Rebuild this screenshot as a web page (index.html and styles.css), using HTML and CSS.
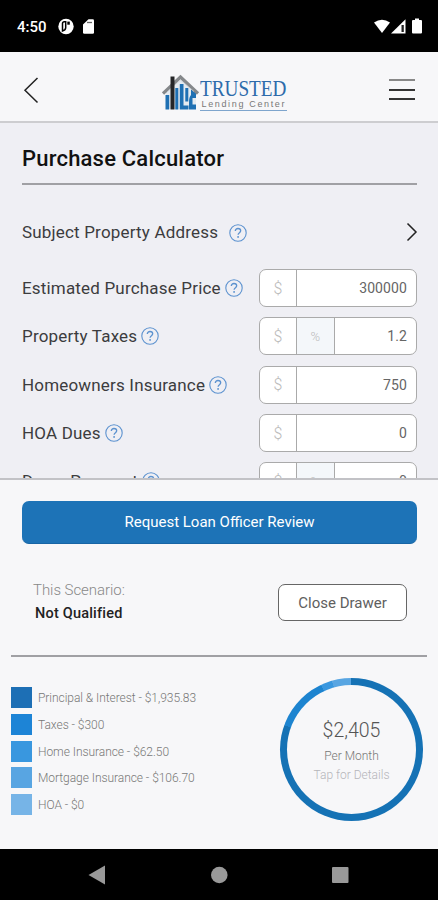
FILE: index.html
```html
<!DOCTYPE html>
<html lang="en">
<head>
<meta charset="utf-8">
<title>Purchase Calculator</title>
<link rel="stylesheet" href="styles.css">
</head>
<body>
<svg class="defs" aria-hidden="true">
  <symbol id="help" viewBox="0 0 18 18">
    <circle cx="9" cy="9" r="8.2" fill="none" stroke="#5c92cf" stroke-width="1.1"/>
    <path d="M6.300 7.1C6.300 5.4 7.4 4.500 9 4.500s2.700.9 2.700 2.300c0 1.8-2.500 1.900-2.600 4" fill="none" stroke="#5c92cf" stroke-width="1.3"/>
    <circle cx="9.1" cy="12.9" r=".95" fill="#5c92cf"/>
  </symbol>
</svg>
<div class="phone">
  <div class="status">
    <span class="clock">4:50</span>
    <svg class="status-left" width="40" height="18" viewBox="0 0 40 18">
      <circle cx="8" cy="8.500" r="7.700" fill="#fff"/>
      <path d="M4.500 13V5.500Q4.500 3.800 6.200 3.800H7.700V9.800Q7.700 12.200 4.500 13Z" fill="#fff" stroke="#000" stroke-width="1.500"/>
      <path d="M9.300 3.600h2.500v3.100H9.300z" fill="#000"/>
      <path d="M30.500 1.300h4.200q1.300 0 1.300 1.300v11.900q0 1.300-1.300 1.300H26.300q-1.300 0-1.300-1.300V6.500z" fill="#fff"/>
      <path d="M29 4.500h5" stroke="#666" stroke-width="1.300"/>
    </svg>
    <svg class="status-right" width="50" height="18" viewBox="0 0 50 18">
      <path d="M0 4.600Q8 -1.200 16 4.600L8 15z" fill="#fff"/>
      <path d="M17 15.500 31.500 1.300V15.500z" fill="#fff"/>
      <path d="M27.500 7h2.300v7h-2.300z" fill="#222"/>
      <path d="M39 2h2V.6h4V2h2q1 0 1 1v11.500q0 1-1 1h-8q-1 0-1-1V3q0-1 1-1z" fill="#fff"/>
    </svg>
  </div>

  <header class="header">
    <svg class="back" width="16" height="28" viewBox="0 0 16 28"><path d="M14.500 2 2 14.300 14.500 26.500" fill="none" stroke="#222" stroke-width="1.500"/></svg>
    <div class="logo">
      <svg class="house" width="38" height="38" viewBox="0 0 38 38">
        <path d="M4 19 19 6.500 34 19v17H4z" fill="#e4eaf0"/>
        <path d="M3.500 22h3.700v14.500H3.500zM13.300 15h3v21.500h-3zM17.800 11h3.700v21.500h5v4h-8.700zM23.300 15h3v13.500h-3z" fill="#1f70b3"/>
        <path d="M34 25V20L29 16v6q-2 2-2 7v7.500h7v-5h-3.500v-6.500z" fill="#1f70b3"/>
        <path d="M1 20.500 18.500 4 36 20.500" fill="none" stroke="#85888b" stroke-width="3.200"/>
        <path d="M5 19 18.500 7 32 18.500" fill="none" stroke="#c9cdd1" stroke-width=".8"/>
        <path d="M8.500 3.500h4v33h-4z" fill="#252628"/>
      </svg>
      <div class="wordmark">
        <div class="trusted">TRUSTED</div>
        <div class="lending">Lending Center</div>
      </div>
    </div>
    <div class="menu"><i></i><i></i><i></i></div>
  </header>

  <main class="form">
    <h1>Purchase Calculator</h1>
    <div class="address">
      <span>Subject Property Address</span><svg class="help"><use href="#help"/></svg>
      <svg class="go" width="12" height="20" viewBox="0 0 12 20"><path d="M1.500 1.500 10 10 1.500 18.500" fill="none" stroke="#222" stroke-width="1.500"/></svg>
    </div>
    <div class="row"><span>Estimated Purchase Price</span><svg class="help"><use href="#help"/></svg>
      <div class="field"><b>$</b><output>300000</output></div></div>
    <div class="row"><span>Property Taxes</span><svg class="help"><use href="#help"/></svg>
      <div class="field"><b>$</b><b class="pct">%</b><output>1.2</output></div></div>
    <div class="row"><span>Homeowners Insurance</span><svg class="help"><use href="#help"/></svg>
      <div class="field"><b>$</b><output>750</output></div></div>
    <div class="row"><span>HOA Dues</span><svg class="help"><use href="#help"/></svg>
      <div class="field"><b>$</b><output>0</output></div></div>
    <div class="row"><span>Down Payment</span><svg class="help"><use href="#help"/></svg>
      <div class="field"><b>$</b><b class="pct">%</b><output>0</output></div></div>
  </main>

  <section class="drawer">
    <button class="request">Request Loan Officer Review</button>
    <div class="scenario">
      <div>
        <div class="this">This Scenario:</div>
        <div class="not">Not Qualified</div>
      </div>
      <button class="close">Close Drawer</button>
    </div>
    <div class="summary">
      <ul class="legend">
        <li class="c1"><i></i><span>Principal &amp; Interest - $1,935.83</span></li>
        <li class="c2"><i></i><span>Taxes - $300</span></li>
        <li class="c3"><i></i><span>Home Insurance - $62.50</span></li>
        <li class="c4"><i></i><span>Mortgage Insurance - $106.70</span></li>
        <li class="c5"><i></i><span>HOA - $0</span></li>
      </ul>
      <div class="donut">
        <div class="hole">
          <div class="amount">$2,405</div>
          <div class="per">Per Month</div>
          <div class="tap">Tap for Details</div>
        </div>
      </div>
    </div>
  </section>

  <nav class="nav">
    <svg width="438" height="51" viewBox="0 0 438 51" fill="#999">
      <path d="M88.500 26 105 16.500v19z"/><circle cx="219.300" cy="26" r="8.300"/><rect x="332" y="18" width="16.500" height="16" rx="1"/>
    </svg>
  </nav>
</div>
</body>
</html>
```

FILE: styles.css
```css
* { box-sizing: border-box; margin: 0; padding: 0; }
body { font-family: Roboto, sans-serif; background: #000; }
.defs { display: none; }
.phone { width: 438px; height: 900px; display: flex; flex-direction: column; overflow: hidden; }

.status { flex: none; height: 52px; background: #000; color: #fff; display: flex; padding: 18px 15px 0 17px; }
.clock { width: 41px; font-size: 15px; line-height: 18px; font-weight: 500; letter-spacing: 0; }
.status-right { margin-left: auto; margin-right: -1px; }

.header { flex: none; height: 71px; background: #f7f7f9; border-bottom: 2px solid #cdcdd0; display: flex; justify-content: space-between; padding: 0 22px 0 23px; }
.back { margin-top: 24px; }
.logo { display: flex; margin: 21px 0 0 20px; width: 125px; }
.house { flex: none; }
.wordmark { width: 87px; height: 38px; border-bottom: 1px solid #7ea5cd; flex: none; }
.trusted { font-family: "Liberation Serif", serif; font-size: 23px; line-height: 20px; color: #2d6bab; padding-top: 6px; transform: scaleX(.835); transform-origin: left; white-space: nowrap; }
.lending { font-family: "Liberation Sans", sans-serif; font-size: 9px; line-height: 9px; color: #777; letter-spacing: 1.650px; white-space: nowrap; margin: 1px 0 0 2px; }
.menu { width: 26px; margin: 27px 1px 0 0; display: flex; flex-direction: column; gap: 7.500px; }
.menu i { height: 2px; background: #333; }
.menu i:first-child { background: #888; }

.form { flex: none; height: 357px; background: #efeff4; padding: 0 21px 0 22px; overflow: hidden; border-bottom: 2px solid #c2c2c6; }
h1 { height: 62px; padding-top: 22px; font-size: 22px; line-height: 27px; font-weight: 500; color: #111; border-bottom: 2px solid #a0a0a4; white-space: nowrap; letter-spacing: .2px; }
.address { height: 95px; display: flex; align-items: center; color: #3c3c3e; font-size: 17px; letter-spacing: .18px; margin-bottom: -10.900px; }
.address .help { margin-left: 11px; }
.address span { padding-bottom: 1px; }
.go { margin: 0 -1px 1px auto; }
.help { width: 18px; height: 18px; flex: none; margin-left: 4px; }
.row { height: 38px; margin-bottom: 10.300px; display: flex; align-items: center; color: #3c3c3e; font-size: 17px; letter-spacing: .18px; white-space: nowrap; }
.field { margin-left: auto; width: 158px; height: 38px; display: flex; background: #fff; border: 1px solid #aaa; border-radius: 7px; overflow: hidden; }
.field b { width: 37.300px; border-right: 1px solid #aaa; color: #bbb; font-size: 16px; font-weight: 300; display: flex; align-items: center; justify-content: center; }
.field .pct { background: #f4f7fa; font-size: 13px; }
.field output { flex: 1; text-align: right; padding-right: 9px; font-size: 14px; line-height: 36px; color: #666; letter-spacing: .1px; }

.drawer { flex: none; height: 369px; background: #f7f7f9; padding: 0 11px; }
button { font-family: Roboto, sans-serif; display: block; }
.request { width: 395px; height: 43px; margin: 21px 0 0 11px; background: #1d73b7; border: 0; border-bottom: 1px solid #1765a5; border-radius: 7px; color: #fff; font-size: 15px; font-weight: 400; }
.scenario { height: 113px; padding: 36px 20px 0 22px; border-bottom: 2px solid #a0a0a4; display: flex; justify-content: space-between; }
.this { font-size: 15px; line-height: 20px; font-weight: 300; color: #888; letter-spacing: -.05px; }
.not { font-size: 14.500px; line-height: 20px; font-weight: 500; color: #222; letter-spacing: .2px; margin: 4px 0 0 2px; }
.close { width: 129px; height: 37px; margin-top: 4px; border: 1px solid #666; border-radius: 7px; background: #fff; color: #606060; font-size: 15px; }
.summary { display: flex; justify-content: space-between; padding-right: 4px; }
.legend { list-style: none; padding-top: 30px; }
.legend li { display: flex; align-items: center; height: 21.300px; margin-bottom: 5.400px; font-size: 12px; font-weight: 300; letter-spacing: -.05px; color: #777; white-space: nowrap; }
.legend i { width: 21px; height: 21px; margin-right: 6px; }
.legend span { padding-top: 1px; }
.c1 i { background: #1d6fb5; } .c2 i { background: #1d84d6; } .c3 i { background: #3997df; } .c4 i { background: #58a5e2; } .c5 i { background: #76b4e7; }
.donut { width: 143px; height: 143px; margin-top: 21px; border-radius: 50%; background: conic-gradient(#1572b5 0 80.500%, #1d84d0 80.500% 93%, #3997df 93% 95.600%, #58a5e2 95.600%); padding: 7px; }
.hole { height: 129px; border-radius: 50%; background: #f7f7f9; text-align: center; padding-top: 35px; }
.amount { font-size: 19.500px; line-height: 22px; font-weight: 300; color: #555; }
.per { font-size: 12px; line-height: 18px; margin-top: 5px; color: #777; font-weight: 300; }
.tap { font-size: 12px; line-height: 18px; margin-top: 1px; color: #b5b5b9; font-weight: 300; }

.nav { flex: none; height: 51px; background: #000; }
.nav svg { display: block; }
```
